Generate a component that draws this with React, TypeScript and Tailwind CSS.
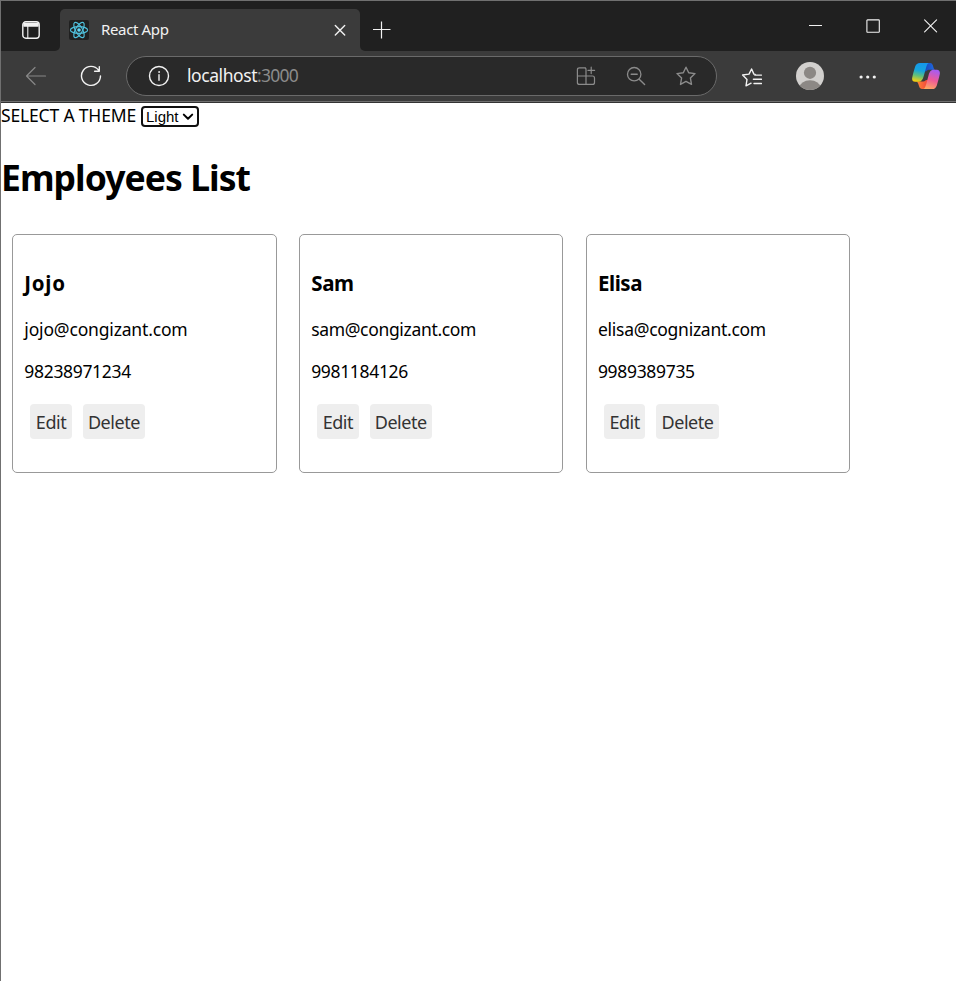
import type { ReactNode } from "react";

type Employee = {
  name: string;
  email: string;
  phone: string;
  nameTracking: string;
  emailTracking: string;
};

const employees: Employee[] = [
  { name: "Jojo", email: "jojo@congizant.com", phone: "98238971234", nameTracking: "tracking-[0.7px]", emailTracking: "tracking-[-0.17px]" },
  { name: "Sam", email: "sam@congizant.com", phone: "9981184126", nameTracking: "tracking-[-0.3px]", emailTracking: "tracking-[-0.33px]" },
  { name: "Elisa", email: "elisa@cognizant.com", phone: "9989389735", nameTracking: "tracking-[-0.45px]", emailTracking: "tracking-[-0.27px]" },
];

function Icon({ size, className, children }: { size: number; className?: string; children: ReactNode }) {
  return (
    <svg
      width={size}
      height={size}
      viewBox={`0 0 ${size} ${size}`}
      fill="none"
      stroke="currentColor"
      strokeWidth="1.4"
      strokeLinecap="round"
      strokeLinejoin="round"
      className={`shrink-0 ${className ?? ""}`}
    >
      {children}
    </svg>
  );
}

const STAR = "M10 1.2 12.7 6.7 19 7.6 14.4 12 15.5 18.4 10 15.4 4.5 18.4 5.6 12 1 7.6 7.3 6.7Z";

function TabStrip() {
  return (
    <div className="flex h-[50px] bg-[#3b3b3b] text-[#f2f2f2]">
      <div className="flex h-[50px] w-[59px] rounded-br-[5px] bg-[#202020] pt-[20px] pl-[21px]">
        <Icon size={18}>
          <rect x="0.8" y="0.8" width="16.4" height="16.4" rx="3" />
          <path d="M2 2.4H16V5H2Z" fill="currentColor" />
          <path d="M5.8 5V17" strokeWidth="1.1" />
        </Icon>
      </div>
      <div className="h-[50px] w-[300px] bg-[#202020] pt-2">
        <div className="flex h-[42px] items-center rounded-t-[5px] bg-[#3b3b3b] pr-3 pl-[9px]">
          <svg width="20" height="20" viewBox="0 0 20 20" className="shrink-0">
            <rect width="20" height="20" rx="2" fill="#202020" />
            <g fill="none" stroke="#4fc0dc" strokeWidth="1.15">
              <ellipse cx="10" cy="10" rx="8.6" ry="3.4" />
              <ellipse cx="10" cy="10" rx="8.6" ry="3.4" transform="rotate(60 10 10)" />
              <ellipse cx="10" cy="10" rx="8.6" ry="3.4" transform="rotate(120 10 10)" />
            </g>
            <circle cx="10" cy="10" r="1.8" fill="#61dafb" />
          </svg>
          <span className="mb-[2px] ml-3 text-[15px] leading-5 tracking-[-0.35px] whitespace-nowrap">React App</span>
          <Icon size={12} className="mr-[2px] ml-auto">
            <path d="M1.3 1.6 10.7 11M10.7 1.6 1.3 11" />
          </Icon>
        </div>
      </div>
      <div className="flex h-[50px] flex-1 rounded-bl-[5px] bg-[#202020]">
        <Icon size={18} className="mt-[20px] ml-[13px]">
          <path d="M8.5 0.5V17.5M0 8.5H17.5" strokeWidth="1.2" strokeLinecap="butt" />
        </Icon>
        <div className="ml-auto flex">
          <Icon size={14} className="mt-[18px]">
            <path d="M0 6.5H13" strokeWidth="1" strokeLinecap="butt" />
          </Icon>
          <Icon size={14} className="mt-[18px] ml-[43px]">
            <rect x="0.9" y="0.9" width="12.4" height="12.4" rx="0.6" strokeWidth="1.1" />
          </Icon>
          <Icon size={14} className="mt-[18px] mr-[18px] ml-[44px]">
            <path d="M0.6 0.8 12.6 12.9M12.6 0.8 0.6 12.9" strokeWidth="1.1" />
          </Icon>
        </div>
      </div>
    </div>
  );
}

function CopilotLogo() {
  return (
    <svg width="28" height="26" viewBox="0 0 28 26" className="shrink-0">
      <defs>
        <linearGradient id="cpLeft" x1="0.5" y1="0" x2="0.3" y2="1">
          <stop offset="0" stopColor="#1597ec" />
          <stop offset="0.4" stopColor="#16a5dc" />
          <stop offset="0.68" stopColor="#62c07a" />
          <stop offset="1" stopColor="#fbd00c" />
        </linearGradient>
        <linearGradient id="cpRight" x1="0.6" y1="0" x2="0.3" y2="1">
          <stop offset="0" stopColor="#a85cf0" />
          <stop offset="0.5" stopColor="#ee5a98" />
          <stop offset="1" stopColor="#ffa860" />
        </linearGradient>
        <linearGradient id="cpTop" x1="0" y1="0" x2="1" y2="0">
          <stop offset="0" stopColor="#1b45b8" />
          <stop offset="1" stopColor="#1e6ee8" />
        </linearGradient>
        <linearGradient id="cpBottom" x1="0" y1="0" x2="1" y2="0">
          <stop offset="0" stopColor="#ff8a34" />
          <stop offset="1" stopColor="#f2423e" />
        </linearGradient>
      </defs>
      <path d="M13.5 0H18C20.2 0 20.8 2 21.4 4.2 21.9 6 22.6 6.8 24 6.8H17.5C15.8 6.8 14.8 7.2 14 8.6L12 8Z" fill="url(#cpTop)" />
      <path d="M15 26H10C7.8 26 7.2 24 6.6 21.8 6.1 20 5.4 18.6 4 18.6H10C12 18.6 13 18.2 14 17L16.5 17.2Z" fill="url(#cpBottom)" />
      <path d="M8 0H17.4C15.6 0 14.9 1.8 14.1 4.5L11.6 13.5C10.7 16.6 9.4 18.8 6.5 18.8H3.2C.4 18.8-.3 16.8.3 14.2 1 11 2.2 6.5 3.2 3.6 4 1.2 5.5 0 8 0Z" fill="url(#cpLeft)" />
      <path d="M20.2 26H10.8C12.6 26 13.3 24.2 14.1 21.5L16.6 12.3C17.5 9.2 18.6 6.8 21.5 6.8H24.8C27.6 6.8 28.3 9 27.7 11.6 27 14.8 25.8 19.5 24.8 22.4 24 24.8 22.5 26 20.2 26Z" fill="url(#cpRight)" />
    </svg>
  );
}

function Toolbar() {
  return (
    <div className="flex h-[50px] items-center bg-[#3b3b3b] pl-6 text-[#f2f2f2]">
      <Icon size={22} className="text-[#878787]">
        <path d="M20.5 11H1.5M10 2.5 1.5 11 10 19.5" strokeWidth="1.2" />
      </Icon>
      <Icon size={22} className="ml-[33px]">
        <path d="M18.7 5.3A9.5 9.5 0 1 0 20.5 11M19.3 1.6V6.2H14.6" />
      </Icon>
      <div className="ml-[24px] flex h-10 w-[591px] items-center rounded-full border border-[#6a6a6a] bg-[#292929] pl-[21px]">
        <Icon size={22}>
          <circle cx="11" cy="11" r="9.5" />
          <path d="M11 9.8V15.2" />
          <circle cx="11" cy="7" r="0.5" fill="currentColor" strokeWidth="0.8" />
        </Icon>
        <span className="mb-[2px] ml-[17px] text-[17.5px] leading-6 tracking-[-0.43px] whitespace-nowrap">
          localhost<span className="tracking-[-0.75px] text-[#8b8b8b]">:3000</span>
        </span>
        <div className="mr-[20px] ml-auto flex items-center gap-[30px] text-[#8b8b8b]">
          <Icon size={20}>
            <path d="M9.5 1.8H3.5Q1.4 1.8 1.4 3.8V16.4Q1.4 18.4 3.5 18.4H16.5Q18.5 18.4 18.5 16.4V12Q18.5 10 16.5 10H1.4M10 18.4V3.5Q10 1.8 8.5 1.8M15.2 1.2V7.6M12 4.4H18.6" strokeWidth="1.2" />
          </Icon>
          <Icon size={20}>
            <circle cx="8.2" cy="8.2" r="6.7" strokeWidth="1.3" />
            <path d="M5.2 8.2H11.2M13.2 13.2 18.6 18.6" />
          </Icon>
          <Icon size={20}>
            <path d={STAR} />
          </Icon>
        </div>
      </div>
      <Icon size={21} className="ml-[24px]">
        <path d="M14.2 8.4 12.9 8.1 10.6 3 8 8.1 1.6 9 6 13.4 5 19.8 10.1 17.2M13.8 9.1H20.4M12.4 13.3H20.4M13 17.5H20.4" />
      </Icon>
      <svg width="28" height="28" viewBox="0 0 28 28" className="ml-[34px] shrink-0">
        <clipPath id="avatar"><circle cx="14" cy="14" r="14" /></clipPath>
        <circle cx="14" cy="14" r="14" fill="#d2d0ce" />
        <circle cx="14" cy="10.8" r="6.1" fill="#8c8885" />
        <ellipse cx="14" cy="25.5" rx="10.5" ry="7.2" fill="#8c8885" clipPath="url(#avatar)" />
      </svg>
      <svg width="18" height="4" viewBox="0 0 18 4" fill="currentColor" className="mt-[2px] ml-[35px] shrink-0">
        <circle cx="2.1" cy="2" r="1.6" />
        <circle cx="8.7" cy="2" r="1.6" />
        <circle cx="15.3" cy="2" r="1.6" />
      </svg>
      <div className="ml-[35px]"><CopilotLogo /></div>
    </div>
  );
}

function EmployeeCard({ employee }: { employee: Employee }) {
  return (
    <article className="h-[239px] w-[264.3px] rounded-[5px] border border-[#999] px-[11px] pt-[34px]">
      <h3 className={`text-[20.5px] leading-[28px] font-bold ${employee.nameTracking}`}>{employee.name}</h3>
      <p className={`mt-[20px] text-[17.5px] leading-6 whitespace-nowrap ${employee.emailTracking}`}>{employee.email}</p>
      <p className="mt-[18px] text-[17.5px] leading-6 tracking-[-0.33px]">{employee.phone}</p>
      <div className="mt-[21px] ml-[6px] flex gap-[11px] text-[18px] leading-[36px] tracking-[-0.45px] text-[#333]">
        <button className="h-[35px] w-[41.4px] rounded-[4px] bg-[#eee]">Edit</button>
        <button className="h-[35px] w-[62.4px] rounded-[4px] bg-[#eee]">Delete</button>
      </div>
    </article>
  );
}

export default function App() {
  return (
    <div className="flex h-[981px] w-[956px] flex-col overflow-hidden border-t border-l border-[#707070] bg-white font-['Noto_Sans','Open_Sans',sans-serif] text-black">
      <TabStrip />
      <Toolbar />
      <div className="h-[2px] shrink-0 border-t border-[#707070] bg-[#333]" />
      <main>
        <div className="flex h-[26px] items-start">
          <span className="text-[17.5px] leading-6 tracking-[-0.17px] whitespace-nowrap">SELECT A THEME</span>
          <button className="mt-[3px] ml-[5px] flex h-[21px] w-[58px] items-center justify-between rounded-[4px] border-2 border-[#101010] pr-[3px] pl-[3px] font-['Liberation_Sans',Arial,sans-serif] text-[15px] leading-4">
            Light
            <Icon size={12}>
              <path d="M1.8 3.6 6 7.8 10.2 3.6" strokeWidth="2" />
            </Icon>
          </button>
        </div>
        <h1 className="mt-[24px] text-[35.5px] leading-[48px] font-bold tracking-[-0.95px]">Employees List</h1>
        <section className="mt-[33px] ml-[11.35px] flex gap-[22.5px]">
          {employees.map((employee) => (
            <EmployeeCard key={employee.email} employee={employee} />
          ))}
        </section>
      </main>
    </div>
  );
}
